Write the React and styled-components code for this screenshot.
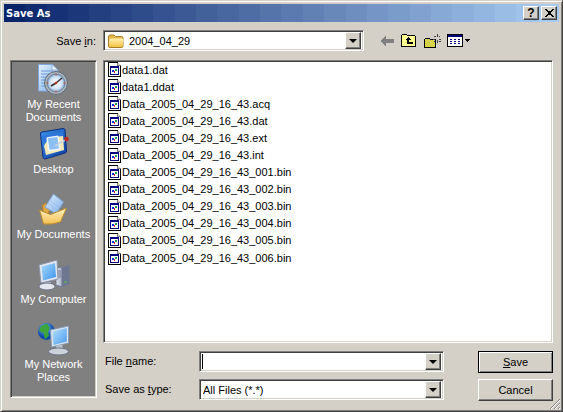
import React from 'react';
import styled, { createGlobalStyle } from 'styled-components';

const GlobalStyle = createGlobalStyle`
  html, body { margin: 0; padding: 0; background: #d4d0c8; }
  body { font-family: 'Liberation Sans', Arial, sans-serif; font-size: 11px; color: #000; }
  svg { display: block; }
`;

// the old 256 colour title bar gradient comes out in visible bands
const bandStops = () => {
  const from = [10, 36, 106];
  const to = [166, 202, 240];
  const count = 26;
  const stops = [];
  for (let i = 0; i < count; i++) {
    const c = from.map((v, k) => Math.round(v + ((to[k] - v) * i) / (count - 1)));
    stops.push(`rgb(${c.join(',')}) ${(i * 100) / count}% ${((i + 1) * 100) / count}%`);
  }
  return stops.join(', ');
};

const Window = styled.div`
  position: relative;
  width: 563px;
  height: 412px;
  box-sizing: border-box;
  padding: 3px;
  background: #d4d0c8;
  border-top: 1px solid #d4d0c8;
  border-left: 1px solid #d4d0c8;
  border-right: 1px solid #404040;
  border-bottom: 1px solid #404040;
  box-shadow: inset 1px 1px 0 #fff, inset -1px -1px 0 #808080;
`;

const TitleBar = styled.div`
  display: flex;
  align-items: center;
  justify-content: space-between;
  height: 18px;
  padding: 0 2px;
  background: linear-gradient(90deg, ${bandStops()});
`;

const Title = styled.span`
  color: #fff;
  font-family: 'DejaVu Sans', sans-serif;
  font-weight: bold;
  font-size: 10px;
`;

const TitleButtons = styled.div`
  display: flex;
  gap: 2px;
`;

const Raised = styled.div`
  box-sizing: border-box;
  background: #d4d0c8;
  border-top: 1px solid #fff;
  border-left: 1px solid #fff;
  border-right: 1px solid #404040;
  border-bottom: 1px solid #404040;
  box-shadow: inset -1px -1px 0 #808080;
`;

const TitleButton = styled(Raised)`
  width: 16px;
  height: 14px;
  display: flex;
  align-items: center;
  justify-content: center;
  font-weight: bold;
  font-size: 12px;
  line-height: 12px;
`;

const Body = styled.div`
  padding: 8px 6px 0;
`;

const TopRow = styled.div`
  display: flex;
  align-items: center;
  height: 21px;
  margin-bottom: 9px;
`;

const RowLabel = styled.label`
  width: 87px;
  margin-right: 6px;
  text-align: right;
  box-sizing: border-box;
  padding-right: 1px;
  white-space: nowrap;
`;

const Sunken = styled.div`
  box-sizing: border-box;
  background: #fff;
  border-top: 1px solid #808080;
  border-left: 1px solid #808080;
  border-right: 1px solid #fff;
  border-bottom: 1px solid #fff;
  box-shadow: inset 1px 1px 0 #404040, inset -1px -1px 0 #d4d0c8;
`;

const Combo = styled(Sunken)`
  display: flex;
  align-items: center;
  width: ${p => p.$width}px;
  height: 21px;
  padding: 2px;
`;

const ComboText = styled.div`
  flex: 1;
  display: flex;
  align-items: center;
  gap: 5px;
  padding-left: ${p => p.$pad || 0}px;
  white-space: nowrap;
  overflow: hidden;
`;

const Caret = styled.input`
  width: 1px;
  height: 15px;
  padding: 0;
  margin: 0;
  border: 0;
  background: #000;
`;

const ArrowButton = styled(Raised)`
  width: 16px;
  height: 17px;
  display: flex;
  align-items: center;
  justify-content: center;
  &::after {
    content: '';
    border-left: 4px solid transparent;
    border-right: 4px solid transparent;
    border-top: 4px solid #000;
  }
`;

const Tools = styled.div`
  display: flex;
  align-items: center;
  margin-left: 16px;
`;

const Tool = styled.div`
  width: ${p => p.$w || 23}px;
  display: flex;
  align-items: center;
`;

const Main = styled.div`
  display: flex;
  gap: 6px;
  align-items: flex-start;
`;

const Places = styled.div`
  box-sizing: border-box;
  width: 87px;
  height: 338px;
  padding-top: 1px;
  background: #808080;
  border-top: 1px solid #808080;
  border-left: 1px solid #808080;
  border-right: 1px solid #fff;
  border-bottom: 1px solid #fff;
  box-shadow: inset 1px 1px 0 #404040, inset -1px -1px 0 #d4d0c8;
`;

const Place = styled.div`
  height: 65px;
  display: flex;
  flex-direction: column;
  align-items: center;
  color: #fff;
  text-align: center;
  line-height: 13px;
`;

const PlaceLabel = styled.div`
  margin-top: 2px;
  width: 80px;
`;

const RightColumn = styled.div`
  width: 450px;
`;

const FileList = styled(Sunken)`
  height: 283px;
  padding: 0 0 0 4px;
  margin-bottom: 8px;
`;

const FileRow = styled.div`
  display: flex;
  align-items: center;
  height: 17.1px;
  white-space: nowrap;
`;

const FormGrid = styled.div`
  display: grid;
  grid-template-columns: 96px 245px 1fr 75px;
  grid-template-rows: 22px 22px;
  row-gap: 6px;
  align-items: start;
`;

const FormLabel = styled.label`
  grid-column: 1;
  line-height: 21px;
  padding-left: 2px;
`;

const Button = styled(Raised)`
  grid-column: 4;
  height: 22px;
  display: flex;
  align-items: center;
  justify-content: center;
  ${p => p.$default && `
    border-color: #000;
    box-shadow: inset 1px 1px 0 #fff, inset -1px -1px 0 #808080;
  `}
`;

const Grip = styled.svg`
  position: absolute;
  right: 1px;
  bottom: 1px;
`;

const files = [
  'data1.dat',
  'data1.ddat',
  'Data_2005_04_29_16_43.acq',
  'Data_2005_04_29_16_43.dat',
  'Data_2005_04_29_16_43.ext',
  'Data_2005_04_29_16_43.int',
  'Data_2005_04_29_16_43_001.bin',
  'Data_2005_04_29_16_43_002.bin',
  'Data_2005_04_29_16_43_003.bin',
  'Data_2005_04_29_16_43_004.bin',
  'Data_2005_04_29_16_43_005.bin',
  'Data_2005_04_29_16_43_006.bin',
];

const CloseGlyph = () => (
  <svg width="9" height="8" viewBox="0 0 9 8" shapeRendering="crispEdges">
    <path d="M0 0 H2 V1 H3 V2 H6 V1 H7 V0 H9 V1 H8 V2 H7 V3 H6 V5 H7 V6 H8 V7 H9 V8 H7 V7 H6 V6 H3 V7 H2 V8 H0 V7 H1 V6 H2 V5 H3 V3 H2 V2 H1 V1 H0 Z" fill="#000" />
  </svg>
);

const FolderIcon = () => (
  <svg width="16" height="14" viewBox="0 0 16 14">
    <defs>
      <linearGradient id="cf" x1="0" y1="0" x2="0" y2="1"><stop offset="0" stopColor="#fff0b4" /><stop offset="1" stopColor="#f4c242" /></linearGradient>
    </defs>
    <path d="M.5 3 Q.5 1 2 1 H6 L7.5 2.5 H13.5 Q15 2.5 15 4 V12 Q15 13.5 13.5 13.5 H2 Q.5 13.5 .5 12 Z" fill="#e8b844" stroke="#a8802a" />
    <path d="M1.2 6 Q1.5 4.5 3 4.5 H14 Q15.5 4.5 15.5 6 L14.5 12 Q14.3 13 13 13 H2.5 Q1 13 1 12 Z" fill="url(#cf)" />
  </svg>
);

const FileIcon = () => (
  <svg width="14" height="15" viewBox="0 0 14 15" shapeRendering="crispEdges">
    <path d="M.5 .5 H9.5 L12.5 3.5 V14.5 H.5 Z" fill="#fff" stroke="#000" />
    <path d="M9.5 .5 V3.5 H12.5" fill="#d4d0c8" stroke="#808080" />
    <rect x="2" y="4" width="9" height="9" fill="#000080" />
    <rect x="3" y="6" width="7" height="6" fill="#fff" />
    <rect x="4" y="8" width="2" height="2" fill="#1030e0" />
    <rect x="6" y="9" width="1" height="2" fill="#e02020" />
    <rect x="7" y="7" width="2" height="2" fill="#20a050" />
  </svg>
);

const BackIcon = () => (
  <svg width="14" height="10" viewBox="0 0 14 10" shapeRendering="crispEdges">
    <path d="M5 0 H6 V3 H14 V7 H6 V10 H5 V9 H4 V8 H3 V7 H2 V6 H1 V4 H2 V3 H3 V2 H4 V1 H5 Z" fill="#808080" />
  </svg>
);

const UpFolderIcon = () => (
  <svg width="15" height="13" viewBox="0 0 15 13" shapeRendering="crispEdges">
    <path d="M.5 2.5 V1.5 L1.5 .5 H5.5 L6.5 1.5 H13.5 L14.5 2.5 V12.5 H.5 Z" fill="#ffff90" stroke="#000" />
    <path d="M7 3 L10 6 H8 V8 H12 V10 H6 V6 H4 Z" fill="#000" />
  </svg>
);

const NewFolderIcon = () => (
  <svg width="17" height="14" viewBox="0 0 17 14" shapeRendering="crispEdges">
    <defs>
      <pattern id="dg" width="2" height="2" patternUnits="userSpaceOnUse">
        <rect width="2" height="2" fill="#ffff00" />
        <rect width="1" height="1" fill="#b0b080" />
        <rect x="1" y="1" width="1" height="1" fill="#b0b080" />
      </pattern>
    </defs>
    <path d="M.5 5.5 L1.5 4.5 H5.5 L6.5 5.5 H11.5 V13.5 H.5 Z" fill="url(#dg)" stroke="#000" />
    <path d="M13 0 V3 M13 6 V9 M9 5 H11 M15 5 H17 M10 2 H11 V3 M15 3 V2 H16 M15 7 H16 V8 M10 8 V7 H11" stroke="#404040" fill="none" />
  </svg>
);

const ViewsIcon = () => (
  <svg width="23" height="13" viewBox="0 0 23 13" shapeRendering="crispEdges">
    <rect x=".5" y=".5" width="15" height="12" fill="#fff" stroke="#000" />
    <rect x="1" y="1" width="14" height="2" fill="#000080" />
    <path d="M3 5 h2 v1 h-2 z M7 5 h2 v1 h-2 z M11 5 h2 v1 h-2 z M3 7 h2 v1 h-2 z M7 7 h2 v1 h-2 z M11 7 h2 v1 h-2 z M3 9 h2 v1 h-2 z M7 9 h2 v1 h-2 z M11 9 h2 v1 h-2 z" fill="#000080" />
    <path d="M18 5 h5 v1 h-1 v1 h-1 v1 h-1 v-1 h-1 v-1 h-1 z" fill="#000" />
  </svg>
);

const RecentIcon = () => (
  <svg width="32" height="34" viewBox="0 0 32 34">
    <defs>
      <linearGradient id="rp" x1="0" y1="0" x2="1" y2="1"><stop offset="0" stopColor="#e4f0fc" /><stop offset="1" stopColor="#7eb0ea" /></linearGradient>
      <radialGradient id="rc"><stop offset="0" stopColor="#fff" /><stop offset=".7" stopColor="#cfe4f8" /><stop offset="1" stopColor="#86a8cc" /></radialGradient>
    </defs>
    <path d="M.5 2.5 H14 L20 8 V29 H.5 Z" fill="url(#rp)" stroke="#7ea8dc" />
    <path d="M3 9 H15 M3 12 H12 M3 15 H9 M3 18 H8 M3 21 H7 M3 24 H7" stroke="#6f9cd8" />
    <path d="M14 2.5 V8 H20 Z" fill="#f4f8ff" stroke="#8fb0d8" />
    <circle cx="18" cy="21" r="11.5" fill="#a8b2ba" stroke="#5f6974" />
    <circle cx="18" cy="21" r="8.8" fill="url(#rc)" stroke="#6a84a4" />
    <path d="M18 21 L24 16" stroke="#333" strokeWidth="1.5" />
    <path d="M18 21 L13 24" stroke="#333" strokeWidth="2" />
    <circle cx="18" cy="21" r="1.3" fill="#c03020" />
    <path d="M18 11.5 V13.5 M18 28.5 V30.5 M8.5 21 H10.5 M25.5 21 H27.5" stroke="#d04830" />
  </svg>
);

const DesktopIcon = () => (
  <svg width="32" height="34" viewBox="0 0 32 34">
    <defs>
      <linearGradient id="db" x1="0" y1="0" x2="1" y2="1"><stop offset="0" stopColor="#3e90ec" /><stop offset="1" stopColor="#0c3f9e" /></linearGradient>
    </defs>
    <path d="M2.5 7 Q2 5.5 4 5 L25 1.5 Q27 1.5 27 3 L28.5 24 Q28.5 25.5 27 26 L7 32 Q5.5 32 5 30.5 Z" fill="url(#db)" stroke="#0a2f80" />
    <path d="M5 9 L25 5 L26 23 L8 28 Z" fill="#2e78dc" />
    <path d="M6 19 C 8 13, 14 10, 25 9 L26 23 L8 28 Z" fill="#f6e9b8" />
    <rect x="10" y="10" width="11" height="13" rx="1" fill="#8cc0f4" stroke="#eef6ff" strokeWidth="1.5" transform="rotate(-8 15 17)" />
    <path d="M17 19 L27 13" stroke="#c8d4e0" strokeWidth="2" />
    <circle cx="28.5" cy="12" r="2.3" fill="#c02820" />
  </svg>
);

const DocumentsIcon = () => (
  <svg width="32" height="34" viewBox="0 0 32 34">
    <defs>
      <linearGradient id="mf" x1="0" y1="0" x2="0" y2="1"><stop offset="0" stopColor="#fff4c4" /><stop offset="1" stopColor="#f3bf52" /></linearGradient>
      <linearGradient id="mp" x1="0" y1="0" x2="1" y2="1"><stop offset="0" stopColor="#e4f0fc" /><stop offset="1" stopColor="#7aaeea" /></linearGradient>
    </defs>
    <path d="M4.5 13 L8 11 L13 15 L6 31 Z" fill="#e3aa44" stroke="#b27c22" />
    <path d="M7 15 L15.5 2 L25.5 10 L18 22 Z" fill="url(#mp)" stroke="#7ea2d0" />
    <path d="M11 8 L21 15 M10 11 L18 18" stroke="#9cc0ec" />
    <path d="M1.5 18 L12.5 22.5 L28.5 16 L22.5 30 Q14 33 5.5 32 Z" fill="url(#mf)" stroke="#b88a2e" />
  </svg>
);

const ComputerIcon = () => (
  <svg width="32" height="34" viewBox="0 0 32 34">
    <defs>
      <linearGradient id="cs" x1="0" y1="0" x2="1" y2="1"><stop offset="0" stopColor="#a8dcfc" /><stop offset="1" stopColor="#3c92ec" /></linearGradient>
      <linearGradient id="ct" x1="0" y1="0" x2="1" y2="0"><stop offset="0" stopColor="#e8ecf0" /><stop offset="1" stopColor="#a4acc0" /></linearGradient>
    </defs>
    <path d="M24 10 L31.5 8 V27 L24 30 Z" fill="#6e7690" />
    <path d="M18 11 L24 10 V30 L18 28 Z" fill="url(#ct)" stroke="#707890" />
    <path d="M19.5 14 H23 M19.5 16 H23 M19.5 18 H23 M19.5 20 H23" stroke="#707890" />
    <circle cx="27.5" cy="25" r="1" fill="#5ec04a" />
    <path d="M1 8 L19 3 L20 22 L3 26 Z" fill="#e4e8ee" stroke="#8a94a8" />
    <path d="M3.5 9.5 L17 6 L18 20 L5 23.5 Z" fill="url(#cs)" />
    <path d="M7 25 H13 V28 H7 Z" fill="#b8bec8" />
    <ellipse cx="9" cy="29.5" rx="8" ry="3.5" fill="#e4e7ec" stroke="#6a7288" />
  </svg>
);

const NetworkIcon = () => (
  <svg width="32" height="34" viewBox="0 0 32 34">
    <defs>
      <linearGradient id="ns" x1="0" y1="0" x2="1" y2="1"><stop offset="0" stopColor="#b4e0fc" /><stop offset="1" stopColor="#4a9cee" /></linearGradient>
      <radialGradient id="ng" cx=".4" cy=".3"><stop offset="0" stopColor="#7ec0f8" /><stop offset="1" stopColor="#0c4cab" /></radialGradient>
    </defs>
    <circle cx="8.5" cy="9.5" r="8.5" fill="url(#ng)" />
    <path d="M3 4 L9 1.5 L12 6 L10 10 L11 14 L7 17 L5.5 11 L1 9 Z" fill="#3ea43c" />
    <path d="M12.5 8 L30.5 4 L30.5 21 L13.5 25 Z" fill="#dde6f0" stroke="#8a9cb6" />
    <path d="M14.5 9.5 L28.8 6 L28.8 19.5 L15.5 23 Z" fill="url(#ns)" />
    <path d="M18 24 L24 22.5 L25 27 H18 Z" fill="#bac2cc" />
    <ellipse cx="20.5" cy="29.5" rx="10" ry="3.5" fill="#cdd2da" stroke="#6a7288" />
  </svg>
);

const places = [
  { icon: <RecentIcon />, label: 'My Recent Documents' },
  { icon: <DesktopIcon />, label: 'Desktop' },
  { icon: <DocumentsIcon />, label: 'My Documents' },
  { icon: <ComputerIcon />, label: 'My Computer' },
  { icon: <NetworkIcon />, label: 'My Network Places' },
];

export default function App() {
  return (
    <>
      <GlobalStyle />
      <Window>
        <TitleBar>
          <Title>Save As</Title>
          <TitleButtons>
            <TitleButton>?</TitleButton>
            <TitleButton><CloseGlyph /></TitleButton>
          </TitleButtons>
        </TitleBar>
        <Body>
          <TopRow>
            <RowLabel>Save <u>i</u>n:</RowLabel>
            <Combo $width={261}>
              <ComboText $pad={2}><FolderIcon />2004_04_29</ComboText>
              <ArrowButton />
            </Combo>
            <Tools>
              <Tool $w={21}><BackIcon /></Tool>
              <Tool><UpFolderIcon /></Tool>
              <Tool><NewFolderIcon /></Tool>
              <Tool $w={24}><ViewsIcon /></Tool>
            </Tools>
          </TopRow>
          <Main>
            <Places>
              {places.map(place => (
                <Place key={place.label}>
                  {place.icon}
                  <PlaceLabel>{place.label}</PlaceLabel>
                </Place>
              ))}
            </Places>
            <RightColumn>
              <FileList>
                {files.map(name => (
                  <FileRow key={name}><FileIcon />{name}</FileRow>
                ))}
              </FileList>
              <FormGrid>
                <FormLabel>File <u>n</u>ame:</FormLabel>
                <Combo $width={245}>
                  <ComboText><Caret readOnly aria-label="File name" /></ComboText>
                  <ArrowButton />
                </Combo>
                <Button $default><span><u>S</u>ave</span></Button>
                <FormLabel>Save as <u>t</u>ype:</FormLabel>
                <Combo $width={245}>
                  <ComboText $pad={1}>All Files (*.*)</ComboText>
                  <ArrowButton />
                </Combo>
                <Button>Cancel</Button>
              </FormGrid>
            </RightColumn>
          </Main>
        </Body>
        <Grip width="12" height="12" viewBox="0 0 12 12">
          <path d="M11 1 L1 11 M11 5 L5 11 M11 9 L9 11" stroke="#808080" />
          <path d="M11 2 L2 11 M11 6 L6 11 M11 10 L10 11" stroke="#fff" />
        </Grip>
      </Window>
    </>
  );
}
